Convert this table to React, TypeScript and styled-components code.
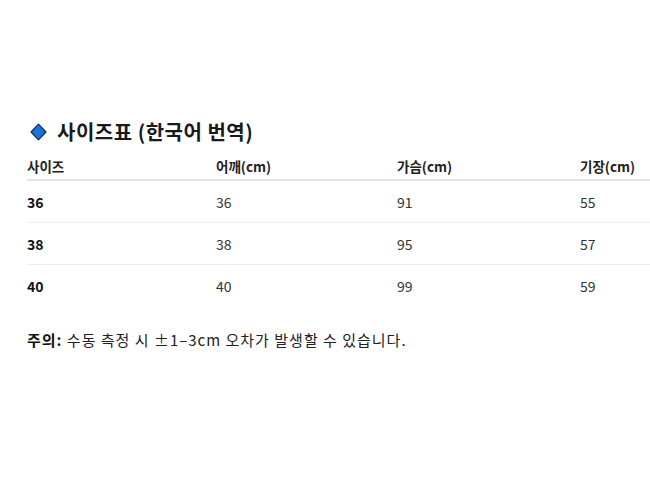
import React from "react";
import styled, { createGlobalStyle } from "styled-components";

const Global = createGlobalStyle`
  html, body { margin: 0; padding: 0; background: #fff; overflow: hidden; }
  body { font-family: "Noto Sans CJK KR", "Noto Sans", sans-serif; color: #222; }
`;

const Page = styled.div`
  padding: 115px 0 0 27px;
  width: 623px;
  overflow: hidden;
`;

const Title = styled.h2`
  display: flex;
  align-items: center;
  gap: 10px;
  margin: 0 0 6px 0;
  font-size: 20px;
  font-weight: 700;
  line-height: 34px;
  color: #1a1a1a;
  letter-spacing: 0.5px;
  svg { margin-left: 3px; flex: none; }
`;

const Table = styled.table`
  width: 740px;
  border-collapse: collapse;
  table-layout: fixed;
  font-size: 14px;
`;

const HeadCell = styled.th`
  text-align: left;
  font-weight: 700;
  color: #222;
  padding: 0 0 3px 0;
  height: 21px;
  font-size: 13.5px;
  border-bottom: 2px solid #e3e3e3;
`;

const Row = styled.tr<{ $last?: boolean }>`
  border-bottom: ${(p) => (p.$last ? "none" : "1px solid #eeeeee")};
`;

const Cell = styled.td<{ $strong?: boolean }>`
  height: 41px;
  padding: 0;
  font-weight: ${(p) => (p.$strong ? 700 : 400)};
  color: ${(p) => (p.$strong ? "#111" : "#333")};
`;

const Note = styled.p`
  margin: 23px 0 0 0;
  font-size: 15px;
  letter-spacing: 1px;
  color: #222;
  b { font-weight: 700; color: #111; }
`;

const Diamond = () => (
  <svg width="17" height="18" viewBox="0 0 17 18">
    <path d="M8.5 1.2 L16 9 L8.5 16.8 L1 9 Z" fill="#1a73d9" stroke="#0d2a55" strokeWidth="1.2" strokeLinejoin="round" />
  </svg>
);

const rows = [
  ["36", "36", "91", "55"],
  ["38", "38", "95", "57"],
  ["40", "40", "99", "59"],
];

export default function App() {
  return (
    <>
      <Global />
      <Page>
        <Title>
          <Diamond />
          사이즈표 (한국어 번역)
        </Title>
        <Table>
          <colgroup>
            <col style={{ width: 189 }} />
            <col style={{ width: 181 }} />
            <col style={{ width: 183 }} />
            <col />
          </colgroup>
          <thead>
            <tr>
              <HeadCell>사이즈</HeadCell>
              <HeadCell>어깨(cm)</HeadCell>
              <HeadCell>가슴(cm)</HeadCell>
              <HeadCell>기장(cm)</HeadCell>
            </tr>
          </thead>
          <tbody>
            {rows.map((r, i) => (
              <Row key={r[0]} $last={i === rows.length - 1}>
                {r.map((c, j) => (
                  <Cell key={j} $strong={j === 0}>
                    {c}
                  </Cell>
                ))}
              </Row>
            ))}
          </tbody>
        </Table>
        <Note>
          <b>주의:</b> 수동 측정 시 ±1–3cm 오차가 발생할 수 있습니다.
        </Note>
      </Page>
    </>
  );
}
